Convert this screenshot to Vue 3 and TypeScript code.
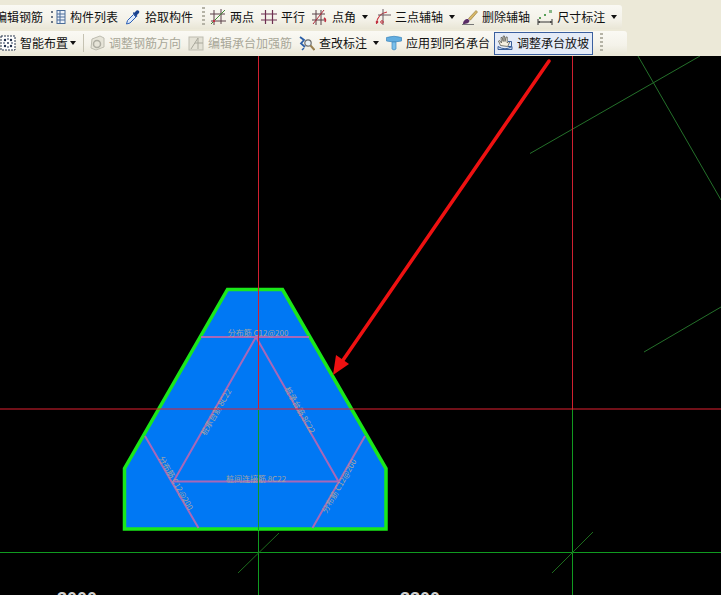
<template>
  <div class="page">
    <header class="bars">
      <div v-for="(row, r) in rows" :key="r" class="bar" :class="`bar-${r}`">
        <template v-for="item in row" :key="item.label || item.kind">
          <span v-if="item.kind === 'grip'" class="grip" />
          <span v-else-if="item.kind === 'sep'" class="sep" />
          <div v-else class="tool" :class="{ off: item.off, active: item.active, tight: item.tight }">
            <svg v-if="item.icon" class="ico" viewBox="0 0 16 16">
              <g v-if="item.icon === 'smart'">
                <rect x="1" y="1" width="14" height="14" fill="#fff" stroke="#26344f" stroke-dasharray="2 1" />
                <path d="M8 3v10M3 8h10" stroke="#2e3f5c" stroke-dasharray="2 2" />
                <circle cx="5" cy="5" r="1.200" fill="#1d2d4a" /><circle cx="11" cy="5" r="1.200" fill="#1d2d4a" />
                <circle cx="5" cy="11" r="1.200" fill="#1d2d4a" /><circle cx="11" cy="11" r="1.200" fill="#1d2d4a" />
              </g>
              <g v-else-if="item.icon === 'list'">
                <path d="M1 3h3M1 8h3M1 13h3" stroke="#6b7787" stroke-width="2" stroke-dasharray="2 1" />
                <rect x="7" y="1.500" width="8" height="13" fill="#eef3fa" stroke="#4a6d99" />
                <path d="M7 5h8M7 8h8M7 11h8M10 2v12" stroke="#4a6d99" />
              </g>
              <g v-else-if="item.icon === 'picker'">
                <path d="M1.500 15l1-3.500 6-6 2.500 2.500-6 6z" fill="#dce9fb" stroke="#2c5fb5" />
                <path d="M8 4.500l3.500 3.500 1-1-.8-.8 2.300-2.200a1.800 1.800 0 0 0-2.500-2.500l-2.200 2.300-.8-.8z" fill="#19428f" />
              </g>
              <g v-else-if="item.icon === 'two'">
                <path d="M0 5h15M1 12h15M4 1v15M11 0v15" stroke="#5a4048" />
                <path d="M1 15L15 1" stroke="#3f8a35" />
                <circle cx="4" cy="12" r="1.200" fill="#c03040" />
              </g>
              <path v-else-if="item.icon === 'par'" d="M0 5h16M0 11h16M4.500 1v14M11.500 1v14" stroke="#6d2f50" stroke-width="1.200" />
              <g v-else-if="item.icon === 'angle'">
                <path d="M0 5h13M0 11h13M4 1v15M9 1v15" stroke="#5a4048" />
                <path d="M1 15L12 1" stroke="#b02a3a" />
                <path d="M12 9a3 3 0 0 1 1 4" fill="none" stroke="#c03040" stroke-width="1.500" />
              </g>
              <g v-else-if="item.icon === 'three'">
                <path d="M1.500 15C2 8 6 4 12 3" fill="none" stroke="#c8303c" stroke-width="1.200" />
                <path d="M8 0v16M3 6h13" stroke="#6b5a60" />
                <circle cx="2" cy="13" r="1.300" fill="#c03040" /><circle cx="7" cy="13" r="1.300" fill="none" stroke="#c03040" />
              </g>
              <g v-else-if="item.icon === 'brush'">
                <path d="M0 15.500h12" stroke="#777" />
                <path d="M1 15c0-3 2-5 5-5l1.500 1.500c0 2.500-3 3.500-6.500 3.500z" fill="#5a2c66" />
                <path d="M6.500 9.500L14 1.500l1.500 1.500-7 8z" fill="#d8b868" stroke="#8a7130" stroke-width=".6" />
              </g>
              <g v-else-if="item.icon === 'dim'">
                <path d="M1 10v6M15 10v6M1 13h14" stroke="#333" />
                <path d="M1 13l2-1v2zM15 13l-2-1v2z" fill="#333" />
                <rect x="2" y="8" width="2" height="2" fill="#58a058" /><rect x="7" y="5" width="2" height="2" fill="#58a058" />
                <rect x="12" y="1" width="3" height="3" fill="#88b888" />
              </g>
              <g v-else-if="item.icon === 'rebarDir'">
                <path d="M3 4l8-3 4 2v9l-8 3-5-2z" fill="#e6e4d8" stroke="#bdbcb0" />
                <circle cx="8" cy="9" r="3.500" fill="none" stroke="#aeada2" stroke-width="1.500" />
              </g>
              <g v-else-if="item.icon === 'strength'">
                <rect x="1" y="2" width="14" height="13" fill="#e4e2d6" stroke="#bdbcb0" />
                <path d="M3 14L10 3M7 8h8M10 3v11" stroke="#a9a89c" />
              </g>
              <g v-else-if="item.icon === 'check'">
                <path d="M1 2l4 3-3 3.500L6 12" fill="none" stroke="#2b5fa8" stroke-width="1.800" />
                <path d="M3 15l2-2" stroke="#2b5fa8" stroke-width="1.500" />
                <circle cx="9" cy="8" r="3.200" fill="#e8f1f6" stroke="#6d6d6d" stroke-width="1.200" />
                <path d="M11.500 10.500L15.500 15" stroke="#9a8050" stroke-width="2" />
              </g>
              <g v-else-if="item.icon === 'apply'">
                <path d="M0.500 2.500Q8 0 15.500 2.500V6Q8 8 0.500 6z" fill="#63aee0" stroke="#3f86bc" stroke-width=".7" />
                <path d="M6 7h4v7q-2 2-4 0z" fill="#7cc0ea" stroke="#3f86bc" stroke-width=".7" />
              </g>
              <g v-else-if="item.icon === 'hand'">
                <path d="M1 11.500Q8 16 15 11.500V14.500H1z" fill="#c8d8ee" stroke="#3a5f9a" />
                <path d="M3.500 10.500L1.500 6l1-.5 2 2.500-.5-5.500h1.200l1 4V1h1.300l.5 5.500L9 2h1.200v6l1.500-1.500 1 .5-2 4.500z" fill="#f5efe1" stroke="#5a5a50" stroke-width=".8" />
                <path d="M11 6.500h3.500v5H11" fill="none" stroke="#3a5f9a" />
              </g>
            </svg>
            <span v-if="item.label" class="label">{{ item.label }}</span>
            <i v-if="item.caret" class="caret" />
          </div>
        </template>
      </div>
    </header>

    <svg class="canvas" viewBox="0 56 721 539">
      <!-- 轴线 -->
      <g fill="none" stroke-width="1">
        <path d="M0 552.500H721M258.500 409V595M572.500 409V595" stroke="#109a20" />
        <path d="M238 573L279 533M552 573L593 532" stroke="#1d6b1d" />
        <path d="M530 153.500L700 56M638 56L721 200M644 352L721 307" stroke="#24702a" />
      </g>

      <!-- 承台 -->
      <polygon points="227.500,289.500 282.500,289.500 386,468.500 386,529 124.500,529 124.500,468.500" fill="#0078f4" stroke="#1ae81a" stroke-width="3.500" />

      <!-- 钢筋线 -->
      <g stroke="#a868b8" stroke-width="2" fill="none">
        <path d="M201 337H309" />
        <path d="M256 337L173.500 481.500H338.500Z" />
        <path d="M145 436L198.500 528M365 436L312.500 528" />
      </g>

      <g class="rebar-text">
        <text x="258" y="336" text-anchor="middle">分布筋 C12@200</text>
        <text x="256" y="482" text-anchor="middle">桩间连接筋 8C22</text>
        <text transform="translate(216 412) rotate(-60)" dy="3" text-anchor="middle">桩承台筋 8C22</text>
        <text transform="translate(300 410) rotate(60)" dy="3" text-anchor="middle">桩承台筋 8C22</text>
        <text transform="translate(176 483) rotate(60)" dy="3" text-anchor="middle">分布筋 C12@200</text>
        <text transform="translate(339 486) rotate(-60)" dy="3" text-anchor="middle">分布筋 C12@200</text>
      </g>

      <path d="M258.500 56V409M572.500 56V409" stroke="#d02030" />
      <path d="M0 409H721" stroke="#e02030" stroke-width="1.200" />
      <path d="M258.500 410V530" stroke="#109a20" />

      <!-- 标注箭头 -->
      <path d="M549 61L339 366" stroke="#ee1111" stroke-width="3.500" stroke-linecap="round" />
      <path d="M333 375L336 355L349 364Z" fill="#ee1111" />

      <text x="77" y="605" class="dim-text" text-anchor="middle">3000</text>
      <text x="420" y="605" class="dim-text" text-anchor="middle">3300</text>
    </svg>
  </div>
</template>

<script setup lang="ts">
interface Tool {
  kind?: 'grip' | 'sep'
  icon?: string
  label?: string
  caret?: boolean
  off?: boolean
  active?: boolean
  tight?: boolean
}

const rows: Tool[][] = [
  [
    { label: '编辑钢筋' },
    { icon: 'list', label: '构件列表' },
    { icon: 'picker', label: '拾取构件' },
    { kind: 'grip' },
    { icon: 'two', label: '两点' },
    { icon: 'par', label: '平行' },
    { icon: 'angle', label: '点角', caret: true },
    { icon: 'three', label: '三点辅轴', caret: true },
    { icon: 'brush', label: '删除辅轴' },
    { icon: 'dim', label: '尺寸标注', caret: true },
  ],
  [
    { icon: 'smart', label: '智能布置', caret: true, tight: true },
    { kind: 'sep' },
    { icon: 'rebarDir', label: '调整钢筋方向', off: true },
    { icon: 'strength', label: '编辑承台加强筋', off: true },
    { icon: 'check', label: '查改标注', caret: true },
    { icon: 'apply', label: '应用到同名承台' },
    { icon: 'hand', label: '调整承台放坡', active: true },
    { kind: 'grip' },
  ],
]
</script>

<style>
html,
body {
  margin: 0;
  background: #000;
  overflow: hidden;
}
</style>

<style scoped>
.page {
  width: 721px;
  height: 595px;
  display: flex;
  flex-direction: column;
  overflow: hidden;
  font-family: "Noto Sans CJK SC", "Liberation Sans", sans-serif;
}

.bars {
  height: 56px;
  flex-shrink: 0;
  box-sizing: border-box;
  padding-top: 5px;
  display: flex;
  flex-direction: column;
  gap: 2px;
  background: #ece9d8;
  overflow: hidden;
}

.bar {
  height: 24px;
  display: flex;
  align-items: center;
  gap: 7px;
  background: linear-gradient(to bottom, #faf9f4, #f4f2e9 60%, #e9e6d6);
  border-radius: 0 3px 3px 0;
}

.bar-0 {
  width: 622px;
}

.bar-0 .tool:first-child {
  margin-left: -5px;
}

.bar-1 {
  width: 627px;
}

.tool {
  display: flex;
  align-items: center;
  gap: 4px;
  height: 24px;
  box-sizing: border-box;
  white-space: nowrap;
  color: #111;
}

.ico {
  width: 16px;
  height: 16px;
  flex-shrink: 0;
}

.label {
  font-size: 12px;
  line-height: 16px;
}

.caret {
  width: 0;
  height: 0;
  margin-left: 2px;
  border: 3px solid transparent;
  border-top: 4px solid #111;
  border-bottom: 0;
}

.tight .caret {
  margin-left: -2px;
}

.off {
  color: #a8a798;
}

.active {
  margin-left: -3px;
  padding: 0 3px 0 2px;
  background: #e4ebf7;
  border: 1px solid #3a5f9f;
  height: 23px;
}

.grip {
  width: 3px;
  height: 20px;
  margin: 0 -2px 0 2px;
  background: repeating-linear-gradient(to bottom, #b5b3a6 0 2px, transparent 2px 4px);
}

.bar-1 .grip {
  margin: 0;
}

.sep {
  width: 1px;
  height: 18px;
  margin-right: -2px;
  background: #c5c2b2;
}

.canvas {
  flex: 1;
  display: block;
  width: 721px;
  height: 539px;
  background: #000;
}

.rebar-text text {
  font-size: 8px;
  fill: #a3a3a3;
}

.dim-text {
  font-family: "Liberation Sans", sans-serif;
  font-size: 18px;
  font-weight: 700;
  fill: #d0d0d0;
}
</style>
